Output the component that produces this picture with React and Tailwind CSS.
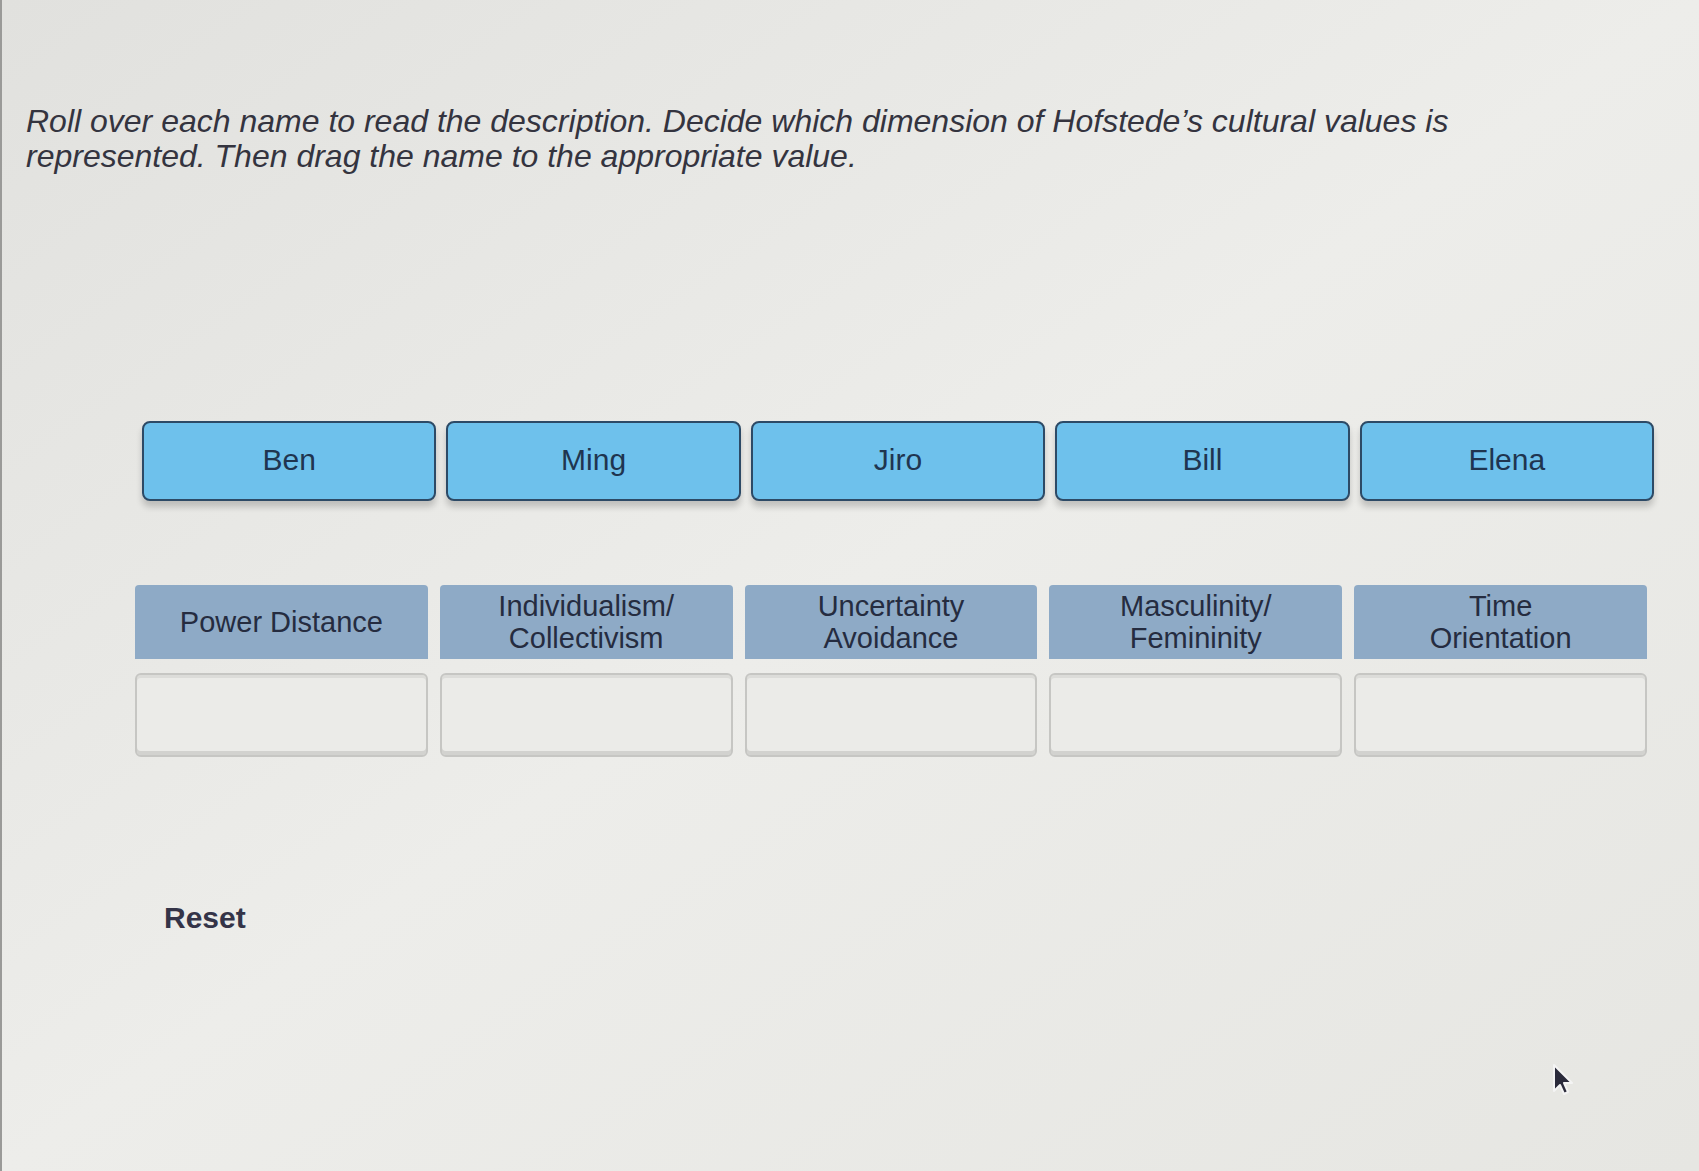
import { useState } from "react";

const names = ["Ben", "Ming", "Jiro", "Bill", "Elena"];
const values = [
  ["Power Distance"],
  ["Individualism/", "Collectivism"],
  ["Uncertainty", "Avoidance"],
  ["Masculinity/", "Femininity"],
  ["Time", "Orientation"],
];

export default function App() {
  const [placed, setPlaced] = useState({});

  return (
    <div
      className="relative min-h-[1171px] w-full overflow-hidden bg-gradient-to-br from-[#e1e1de] via-[#ededea] to-[#e6e6e2] border-l-2 border-[#9a9a98]"
      style={{ fontFamily: "'Liberation Sans', Arial, sans-serif" }}
    >
      {/* instructions */}
      <p className="pl-[24px] pt-[104px] pr-[200px] text-[32px] leading-[35px] italic text-[#34343f]">
        Roll over each name to read the description. Decide which dimension of Hofstede’s cultural values is represented. Then drag the name to the appropriate value.
      </p>

      {/* names */}
      <div className="mt-[247px] ml-[140px] grid w-[1512px] grid-cols-5 gap-[10px]">
        {names.map((n) => (
          <button
            key={n}
            className="h-[80px] rounded-[8px] border-2 border-[#2d4a66] bg-[#6ec1ec] pb-[4px] text-[30px] text-[#1f3550] shadow-[0_6px_6px_rgba(0,0,0,0.18)]"
          >
            {n}
          </button>
        ))}
      </div>

      {/* values */}
      <div className="mt-[84px] ml-[133px] grid w-[1512px] grid-cols-5 gap-x-[12px] gap-y-[14px]">
        {values.map((v, i) => (
          <div
            key={i}
            className="flex h-[74px] flex-col items-center justify-center bg-[#8eaac6] text-[29px] leading-[32px] text-[#252c40] rounded-tl-[4px] rounded-tr-[4px]"
          >
            {v.map((line) => (
              <span key={line}>{line}</span>
            ))}
          </div>
        ))}
        {values.map((v, i) => (
          <div
            key={"d" + i}
            className="h-[84px] rounded-[6px] border-2 border-[#c6c6c3] bg-[#ebebe8] shadow-[inset_0_-4px_0_#d2d2cf,inset_0_3px_0_#dcdcd9]"
          >
            {placed[i]}
          </div>
        ))}
      </div>

      <button
        onClick={() => setPlaced({})}
        className="mt-[138px] ml-[162px] text-[30px] font-bold text-[#343448]"
      >
        Reset
      </button>

      {/* mouse pointer */}
      <svg
        className="absolute left-[1550px] top-[1063px]"
        width="24"
        height="36"
        viewBox="0 0 24 36"
      >
        <path
          d="M2 2 L2 28 L8 22 L12 31 L16 29 L12 20 L20 20 Z"
          fill="#2a2a3a"
          stroke="#f4f4f4"
          strokeWidth="2"
          strokeLinejoin="round"
        />
      </svg>
    </div>
  );
}
